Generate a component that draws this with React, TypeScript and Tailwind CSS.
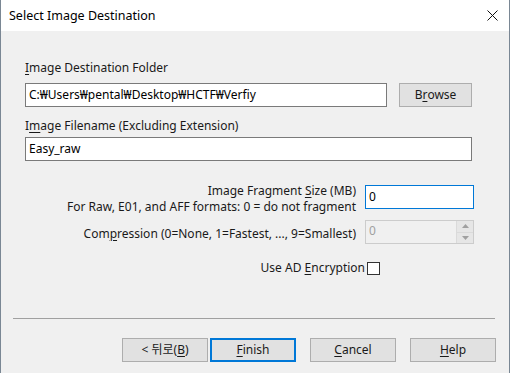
import React from 'react';

const font = "font-['Noto_Sans','Noto_Sans_CJK_KR',sans-serif]";

function U({ children }: { children: React.ReactNode }) {
  return <span className="underline underline-offset-2 decoration-1">{children}</span>;
}

function Btn({ children, primary }: { children: React.ReactNode; primary?: boolean }) {
  return (
    <div
      className={
        'w-[86px] h-[24px] flex items-center justify-center bg-[#e1e1e1] text-[#1a1a1a] ' +
        (primary ? 'border-2 border-[#0078d7]' : 'border border-[#adadad]')
      }
    >
      {children}
    </div>
  );
}

export default function App() {
  return (
    <div className={`w-[510px] h-[373px] flex flex-col bg-[#f0f0f0] border-l border-r border-[#7a8794] text-[12px] leading-[16px] text-[#1a1a1a] ${font}`}>
      {/* title bar */}
      <div className="h-[31px] bg-white flex items-center justify-between pl-[8px] pr-[10px] shrink-0">
        <span className="text-[12.5px] text-black">Select Image Destination</span>
        <svg width="11" height="11" viewBox="0 0 11 11" className="mr-[1px]">
          <path d="M0.5 0.5 L10.5 10.5 M10.5 0.5 L0.5 10.5" stroke="#111" strokeWidth="1" />
        </svg>
      </div>

      {/* body */}
      <div className="flex flex-col pl-[24px] pr-[37px]">
        <div className="mt-[29px] h-[16px]"><U>I</U>mage Destination Folder</div>
        <div className="mt-[7px] flex items-center">
          <div className="w-[362px] h-[24px] bg-white border border-[#7a7a7a] flex items-center pl-[3px] text-black">
            C:₩Users₩pental₩Desktop₩HCTF₩Verfiy
          </div>
          <div className="ml-[12px] w-[73px] h-[24px] bg-[#e1e1e1] border border-[#adadad] flex items-center justify-center">
            B<U>r</U>owse
          </div>
        </div>

        <div className="mt-[11px] h-[16px]">I<U>m</U>age Filename (Excluding Extension)</div>
        <div className="mt-[3px] w-[447px] h-[24px] bg-white border border-[#7a7a7a] flex items-center pl-[3px] text-black">
          Easy_raw
        </div>

        <div className="mt-[24px] grid grid-cols-[1fr_109px] gap-x-[9px] -mr-[2px]">
          <div className="text-right -mt-[2px]">
            <div>Image Fragment <U>S</U>ize (MB)</div>
            <div>For Raw, E01, and AFF formats: 0 = do not fragment</div>
          </div>
          <div className="h-[24px] bg-white border border-[#0078d7] flex items-center pl-[3px] text-black self-start">
            0
          </div>

          <div className="text-right self-center mt-[5px] pt-[3px]">
            Com<U>p</U>ression (0=None, 1=Fastest, ..., 9=Smallest)
          </div>
          <div className="mt-[5px] h-[24px] border border-[#cccccc] bg-[#f0f0f0] flex items-stretch">
            <span className="flex-1 pl-[3px] text-[#a0a0a0] flex items-center pb-[2px]">0</span>
            <div className="w-[17px] flex flex-col border-l border-[#dadada]">
              <div className="flex-1 flex items-center justify-center bg-[#e6e6e6] border-b border-[#dadada]">
                <svg width="7" height="4" viewBox="0 0 7 4"><path d="M3.5 0 L7 4 L0 4 Z" fill="#a0a0a0" /></svg>
              </div>
              <div className="flex-1 flex items-center justify-center bg-[#e6e6e6]">
                <svg width="7" height="4" viewBox="0 0 7 4"><path d="M0 0 L7 0 L3.5 4 Z" fill="#a0a0a0" /></svg>
              </div>
            </div>
          </div>
        </div>

        <div className="mt-[16px] flex items-center justify-end pr-[92px]">
          <span>Use AD <U>E</U>ncryption</span>
          <span className="ml-[2px] w-[13px] h-[13px] bg-white border border-[#333333]" />
        </div>
      </div>

      {/* separator */}
      <div className="mt-[42px] ml-[12px] mr-[14px] h-px bg-[#a0a0a0]" />

      {/* buttons */}
      <div className="mt-[19px] flex justify-end pr-[13px] gap-[2px]">
        <Btn>&lt; 뒤로(<U>B</U>)</Btn>
        <Btn primary>
          <U>F</U>inish
        </Btn>
        <div className="ml-[12px]">
          <Btn>
            <U>C</U>ancel
          </Btn>
        </div>
        <div className="ml-[12px]">
          <Btn>
            <U>H</U>elp
          </Btn>
        </div>
      </div>
    </div>
  );
}
